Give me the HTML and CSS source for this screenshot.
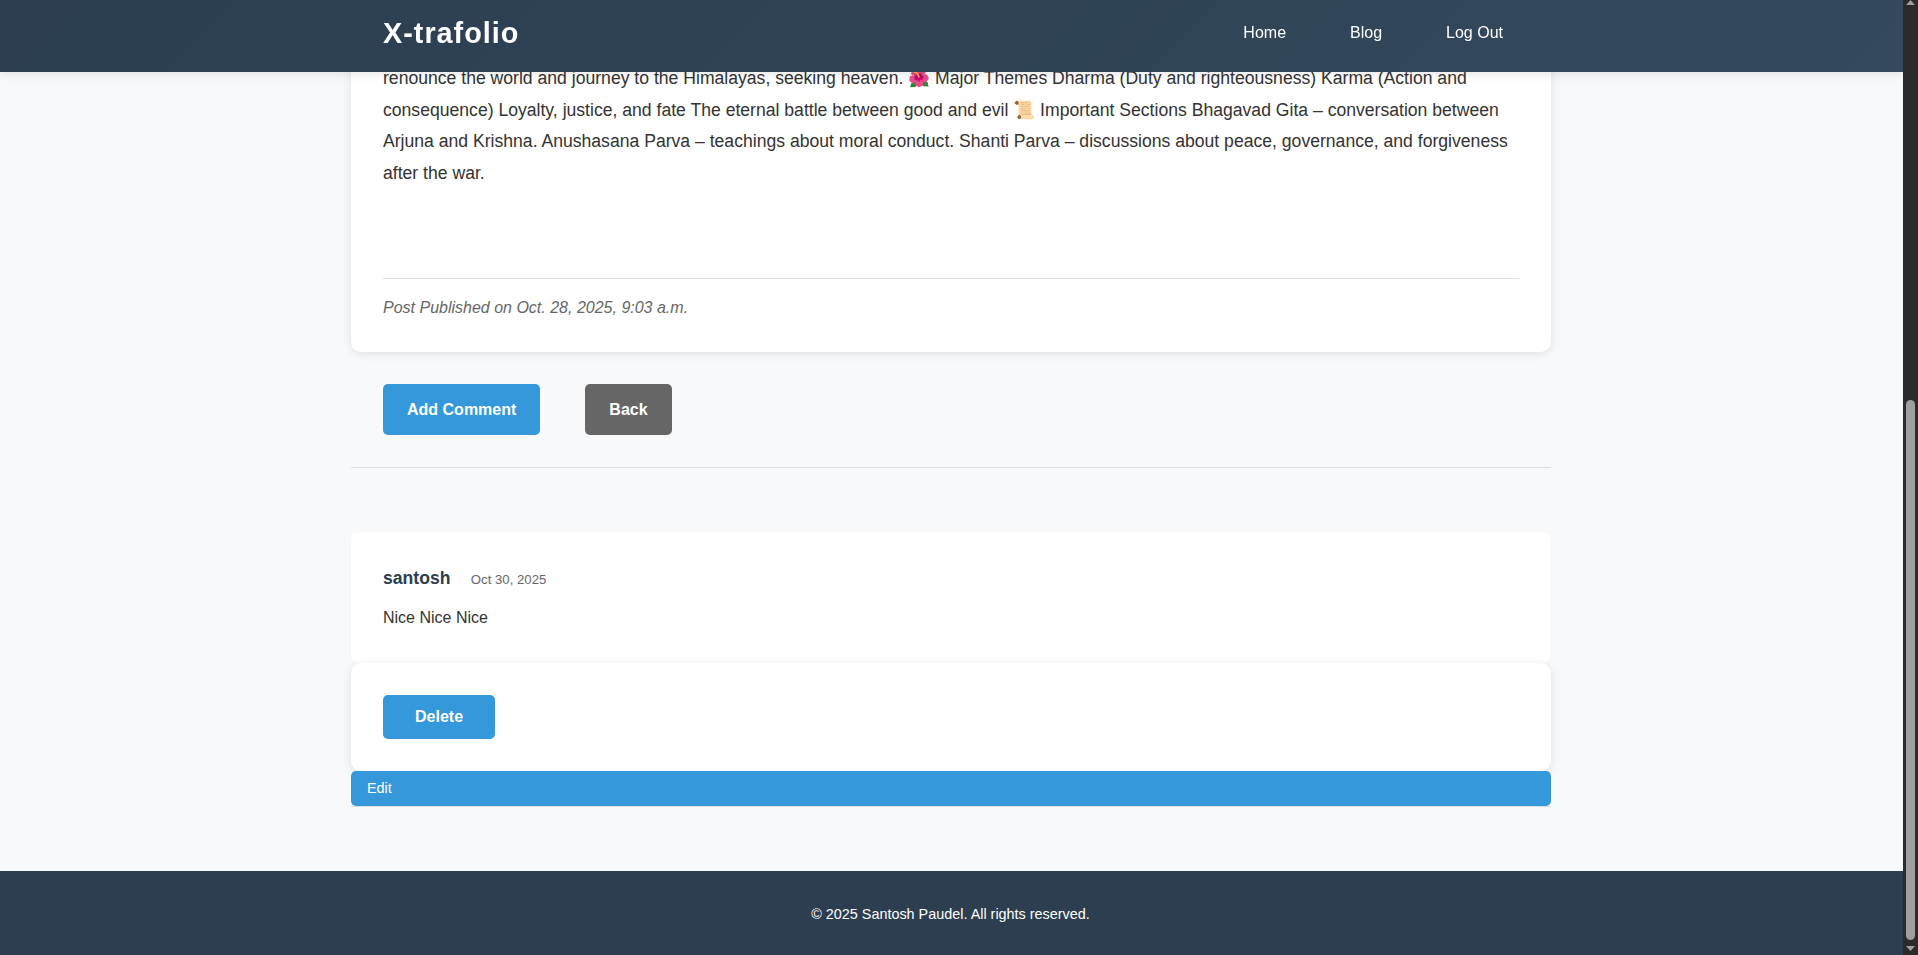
FILE: index.html
```html
<!DOCTYPE html>
<html lang="en">
<head>
<meta charset="UTF-8">
<title>X-trafolio</title>
<link rel="stylesheet" href="styles.css">
</head>
<body>
<div class="page">
  <header class="site-header">
    <div class="header-inner">
      <a class="logo">X-trafolio</a>
      <nav class="nav"><a>Home</a><a>Blog</a><a>Log Out</a></nav>
    </div>
  </header>
  <main class="container">
    <article class="post">
      <p class="post-body">renounce the world and journey to the Himalayas, seeking heaven. 🌺 Major Themes Dharma (Duty and righteousness) Karma (Action and consequence) Loyalty, justice, and fate The eternal battle between good and evil 📜 Important Sections Bhagavad Gita – conversation between Arjuna and Krishna. Anushasana Parva – teachings about moral conduct. Shanti Parva – discussions about peace, governance, and forgiveness after the war.</p>
      <p class="post-meta">Post Published on Oct. 28, 2025, 9:03 a.m.</p>
    </article>
    <div class="actions">
      <a class="btn">Add Comment</a>
      <a class="btn btn-back">Back</a>
    </div>
    <section class="comments">
      <div class="comment">
        <div class="comment-head"><strong class="author">santosh</strong><span class="date">Oct 30, 2025</span></div>
        <p class="comment-text">Nice Nice Nice</p>
      </div>
      <form class="delete-form"><button class="delete" type="button">Delete</button></form>
      <a class="edit">Edit</a>
    </section>
  </main>
  <footer class="footer">© 2025 Santosh Paudel. All rights reserved.</footer>
</div>
<div class="scrollbar">
  <svg class="arrow" width="9" height="5" viewBox="0 0 9 5"><path d="M4.500 0L9 5H0z"/></svg>
  <div class="thumb"></div>
  <svg class="arrow" width="9" height="5" viewBox="0 0 9 5"><path d="M0 0h9L4.500 5z"/></svg>
</div>
</body>
</html>
```
FILE: styles.css
```css
* { box-sizing: border-box; margin: 0; padding: 0; }
body {
  display: flex;
  height: 955px;
  overflow: hidden;
  font-family: "Liberation Sans", Arial, sans-serif;
  font-size: 16px;
  line-height: 1.6;
  color: #333;
  background: #f8f9fb;
}
.page { flex: 1; display: flex; flex-direction: column; }
.site-header {
  position: fixed;
  top: 0;
  left: 0;
  right: 15px;
  z-index: 10;
  height: 72px;
  padding: 10px 1px 16px 0;
  color: #fff;
  background: linear-gradient(135deg, #2c3e50, #34495e);
  box-shadow: 0 2px 10px rgba(0, 0, 0, 0.1);
}
.header-inner {
  display: flex;
  justify-content: space-between;
  align-items: center;
  width: 1200px;
  margin: 0 auto;
  padding: 0 32px;
}
.logo { font-size: 28.8px; font-weight: 700; letter-spacing: 1px; }
.nav { display: flex; gap: 32px; }
.nav a { padding: 0 16px; }
.container { width: 1200px; margin: 0 0 0 351px; flex: 1; }
.post {
  height: 352px;
  padding: 63px 32px 0;
  background: #fff;
  border-radius: 0 0 10px 10px;
  box-shadow: 0 2px 10px rgba(0, 0, 0, 0.1);
}
.post-body { font-size: 17.6px; line-height: 1.8; }
.post-meta {
  margin-top: 88px;
  padding-top: 16px;
  border-top: 1px solid #ddd;
  font-style: italic;
  color: #666;
}
.actions {
  display: flex;
  gap: 45px;
  padding: 32px;
  height: 116px;
  border-bottom: 1px solid #ddd;
}
.btn {
  height: 51px;
  padding: 12.8px 24px;
  border-radius: 5px;
  font-weight: 700;
  color: #fff;
  background: #3498db;
}
.btn-back { background: #666; }
.comments { margin-top: 64px; border-bottom: 1px solid #ddd; }
.comment {
  height: 131px;
  padding: 32px;
  border-radius: 8px;
  background: #fff;
  box-shadow: 0 1px 3px rgba(0, 0, 0, 0.03);
}
.comment-head { display: flex; align-items: baseline; gap: 20.4px; }
.author { font-size: 17.6px; color: #2c3e50; }
.date { font-size: 13.2px; color: #666; }
.comment-text { margin-top: 13px; }
.delete-form {
  height: 108px;
  padding: 32px;
  border-radius: 10px;
  background: #fff;
  box-shadow: 0 2px 10px rgba(0, 0, 0, 0.1);
}
.delete {
  display: block;
  height: 44px;
  padding: 0 32px;
  border: 0;
  border-radius: 5px;
  font: 700 16px "Liberation Sans", Arial, sans-serif;
  color: #fff;
  background: #3498db;
}
.edit {
  display: block;
  position: relative;
  height: 35px;
  padding: 6px 16px;
  border-radius: 5px;
  font-size: 14.4px;
  color: #fff;
  background: #3498db;
}
.footer {
  height: 84px;
  padding: 32px 2px 0 0;
  text-align: center;
  font-size: 14.4px;
  color: #fff;
  background: #2c3e50;
}
.scrollbar {
  display: flex;
  flex-direction: column;
  align-items: center;
  width: 15px;
  padding-bottom: 4px;
  background: #2b2b2b;
}
.arrow { display: block; fill: #9f9f9f; }
.thumb {
  width: 9px;
  height: 540px;
  margin: 395px 0 6px;
  border-radius: 5px;
  background: #9f9f9f;
}
```
